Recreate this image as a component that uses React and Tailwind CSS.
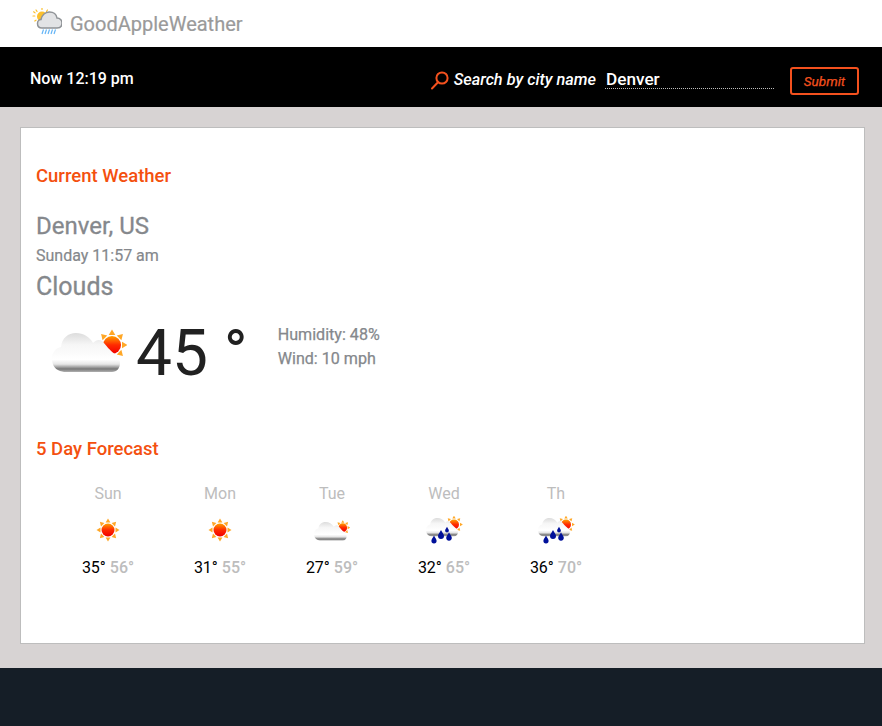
import React from "react";

const CLOUD = "M8 44 C2 42 0 37 0 31 C0 25 4 21 9 20 C10 11 16 6 24 6 C31 6 38 10 41 16 C44 13 47 12 50 14 C54 18 58 24 63 27 C66 29 68 32 68 36 C68 41 65 45 60 45 L12 45 Z";
const RAY_ANGLES = [0, 45, 90, 135, 180, 225, 270, 315];

function Defs({ id }) {
  return (
    <defs>
      <linearGradient id={`${id}c`} x1="0" y1="0" x2="0" y2="1">
        <stop offset="0" stopColor="#dcdcdc" />
        <stop offset="0.3" stopColor="#f6f6f6" />
        <stop offset="0.68" stopColor="#ffffff" />
        <stop offset="0.8" stopColor="#e6e6e6" />
        <stop offset="0.92" stopColor="#777777" />
        <stop offset="1" stopColor="#b0b0b0" />
      </linearGradient>
      <linearGradient id={`${id}s`} x1="0" y1="0" x2="0" y2="1">
        <stop offset="0" stopColor="#ffa000" />
        <stop offset="0.5" stopColor="#ff2a00" />
        <stop offset="1" stopColor="#f00000" />
      </linearGradient>
    </defs>
  );
}

function Sun({ id, cx, cy, r, ray }) {
  return (
    <g>
      {RAY_ANGLES.map((a) => (
        <polygon
          key={a}
          points={`${cx - ray * 0.6},${cy - r - 1} ${cx + ray * 0.6},${cy - r - 1} ${cx},${cy - r - 1 - ray}`}
          fill="#ffa726"
          transform={`rotate(${a} ${cx} ${cy})`}
        />
      ))}
      <circle cx={cx} cy={cy} r={r} fill={`url(#${id}s)`} />
    </g>
  );
}

function SunIcon({ id }) {
  return (
    <svg width="24" height="24" viewBox="0 0 24 24" className="block">
      <Defs id={id} />
      <Sun id={id} cx={12} cy={12} r={6.5} ray={4} />
    </svg>
  );
}

function CloudSun({ id, w, h }) {
  return (
    <svg width={w} height={h} viewBox="0 0 75 48" className="block">
      <Defs id={id} />
      <Sun id={id} cx={60} cy={18} r={9} ray={5.5} />
      <path d={CLOUD} fill={`url(#${id}c)`} />
    </svg>
  );
}

function RainSun({ id }) {
  const drop = (x, y, s) => (
    <path
      d={`M${x} ${y - 1.7 * s} C${x + 0.5 * s} ${y - 0.6 * s} ${x + s} ${y - 0.3 * s} ${x + s} ${y + 0.3 * s} A${s} ${s} 0 1 1 ${x - s} ${y + 0.3 * s} C${x - s} ${y - 0.3 * s} ${x - 0.5 * s} ${y - 0.6 * s} ${x} ${y - 1.7 * s} Z`}
      fill="#00109a"
    />
  );
  return (
    <svg width="37" height="28" viewBox="0 0 37 28" className="block">
      <Defs id={id} />
      <Sun id={id} cx={28} cy={8.5} r={5} ray={2.8} />
      <path d={CLOUD} transform="translate(0 -0.8) scale(0.47 0.47)" fill={`url(#${id}c)`} />
      {drop(8, 24, 2.6)}
      {drop(15, 19, 3)}
      {drop(23, 21, 2.8)}
      {drop(21, 14, 1.9)}
    </svg>
  );
}

function Logo() {
  return (
    <svg width="32" height="32" viewBox="0 0 32 32" className="block">
      <g stroke="#fbc02d" strokeWidth="1.2" strokeLinecap="round">
        <path d="M12 0 L12 1.5" />
        <path d="M6 2 L7 3.4" />
        <path d="M17.5 2 L16.5 3.4" />
        <path d="M3 8 L4.8 8" />
        <path d="M3.6 3.8 L5 4.8" />
        <path d="M4.8 13 L6 12.2" />
      </g>
      <circle cx="12" cy="8.5" r="5" fill="#fbc02d" />
      <path
        d="M12 20 C9 20 7.5 18 7.5 15.5 C7.5 13 9.5 11.5 11 11.5 C12 7 15.5 4 19.5 4 C23.5 4 26.5 6.5 27 10 C30 10 32 12.5 32 15 C32 18 30 20 27 20 Z"
        fill="#e2e3e5"
        stroke="#8f9397"
        strokeWidth="1.5"
      />
      <g stroke="#64b5f6" strokeWidth="1.2">
        <path d="M12 26 L13.5 21.5" />
        <path d="M15 26 L16.5 21.5" />
        <path d="M18 26 L19.5 21.5" />
        <path d="M21 26 L22.5 21.5" />
        <path d="M24 26 L25.5 21.5" />
      </g>
    </svg>
  );
}

const days = [
  { d: "Sun", lo: "35°", hi: "56°", k: "sun" },
  { d: "Mon", lo: "31°", hi: "55°", k: "sun" },
  { d: "Tue", lo: "27°", hi: "59°", k: "cloud" },
  { d: "Wed", lo: "32°", hi: "65°", k: "rain" },
  { d: "Th", lo: "36°", hi: "70°", k: "rain" },
];

export default function App() {
  return (
    <div className="min-h-[726px] flex flex-col bg-[#d7d3d3] font-['Roboto',sans-serif]">
      <header className="h-[47px] bg-white flex items-center pl-[30px]">
        <Logo />
        <span className="ml-2 text-[20px] leading-none text-[#9a9a9a] [-webkit-text-stroke:0.2px]">GoodAppleWeather</span>
      </header>

      <nav className="h-[60px] bg-black flex items-center pl-[30px] pr-[23px] pt-[4px]">
        <span className="text-white text-[16px] font-medium">Now 12:19 pm</span>
        <div className="ml-auto flex items-center">
          <div className="flex items-center mt-[2px]">
            <svg width="20" height="20" viewBox="0 0 20 20" fill="none" stroke="#f4511e" strokeWidth="2" className="block mr-[4px]">
              <circle cx="12" cy="8" r="5.6" />
              <path d="M8 12.3 L2 18.5" strokeLinecap="round" />
            </svg>
            <span className="text-white text-[16.3px] font-medium italic">Search by city name</span>
            <div className="ml-[9px] w-[169px] h-[18px] border-b border-dotted border-[#bdbdbd] flex items-center pl-[1px]">
              <span className="text-white text-[17.2px] font-medium leading-none">Denver</span>
            </div>
          </div>
          <button className="ml-4 mt-[4px] w-[69px] h-[28px] rounded-[3px] border-2 border-[#f4511e] text-[#f4511e] text-[13.5px] font-normal italic [-webkit-text-stroke:0.25px] flex items-center justify-center">
            Submit
          </button>
        </div>
      </nav>

      <main className="flex-1 pl-[20px] pr-[17px] pt-[20px] pb-[24px] flex">
        <section className="flex-1 h-[517px] bg-white border border-[#bdbdbd] pl-[15px]">
          <h2 className="mt-[38px] text-[18.5px] leading-[21px] font-medium text-[#f4500f]">Current Weather</h2>
          <p className="mt-[25px] text-[24px] leading-[28px] text-[#85888c] [-webkit-text-stroke:0.3px]">Denver, US</p>
          <p className="mt-[6px] text-[16px] leading-[19px] text-[#85888c] [-webkit-text-stroke:0.2px]">Sunday 11:57 am</p>
          <p className="mt-[7px] text-[25px] leading-[30px] text-[#85888c] [-webkit-text-stroke:0.3px]">Clouds</p>

          <div className="mt-[20px] flex items-start">
            <div className="ml-[16px] mt-[5px]">
              <CloudSun id="big" w={75} h={48} />
            </div>
            <span className="ml-[9px] text-[64px] leading-[64px] text-[#212121]">45 °</span>
            <div className="ml-[30px] mt-[1px] text-[16.1px] leading-[24px] text-[#85888c] [-webkit-text-stroke:0.25px]">
              <p>Humidity: 48%</p>
              <p>Wind: 10 mph</p>
            </div>
          </div>

          <h2 className="mt-[53px] text-[18.5px] leading-[21px] font-medium text-[#f4500f]">5 Day Forecast</h2>

          <div className="mt-[24px] ml-[16px] flex">
            {days.map((x) => (
              <div key={x.d} className="w-[112px] flex flex-col items-center">
                <span className="text-[16px] leading-[19px] text-[#bdbdbd]">{x.d}</span>
                <div className="h-[34px] mt-[10px] flex items-center justify-center">
                  {x.k === "sun" && <SunIcon id={x.d} />}
                  {x.k === "cloud" && <CloudSun id={x.d} w={36} h={23} />}
                  {x.k === "rain" && <RainSun id={x.d} />}
                </div>
                <p className="mt-[11px] text-[16px] leading-[19px]">
                  <span className="text-black">{x.lo}</span>{" "}
                  <span className="font-medium text-[#bdbdbd]">{x.hi}</span>
                </p>
              </div>
            ))}
          </div>
        </section>
      </main>

      <footer className="h-[58px] bg-[#151e27]" />
    </div>
  );
}
